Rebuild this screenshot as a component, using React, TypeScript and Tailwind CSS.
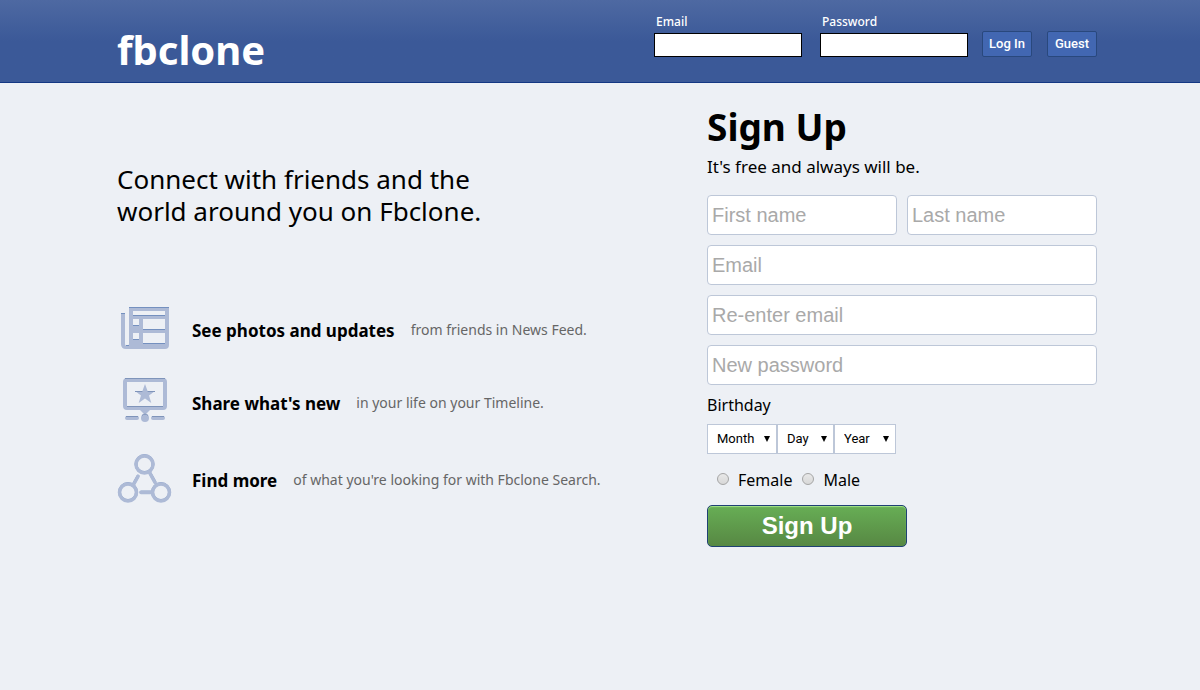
import type { ReactNode } from "react";

function NewsIcon() {
  return (
    <svg width="56" height="54" viewBox="0 1 56 54" aria-hidden="true">
      <path d="M4 11h4v31a1 1 0 0 0 4 0V5h40v38q0 4-4 4H9q-5 0-5-5z" fill="#adbad6" />
      <path d="M16 9h32v4H16zM16 17h6v6h-6zM26 17h22v10H26zM16 31h6v6h-6zM26 31h22v10H26z" fill="#edf0f5" />
      <path d="M4 11h4v1H4zM12 5h40v1H12zM16 13h32v1H16zM16 23h6v1h-6zM26 27h22v1H26zM16 37h6v1h-6zM26 41h22v1H26zM9 43h3v1H9z" fill="#7490bf" />
    </svg>
  );
}

function TimelineIcon() {
  return (
    <svg width="56" height="56" viewBox="0 2 56 56" aria-hidden="true">
      <rect x="8" y="7" width="40" height="28" rx="2" fill="none" stroke="#adbad6" strokeWidth="4" />
      <path d="M8 5.5h40M10 33.5h36" stroke="#7f94ba" strokeWidth="1" />
      <path d="M23 37h10l-5 5z" fill="#adbad6" />
      <path d="M28 11l2.600 7H38l-6 4.600 2.300 7.400-6.300-4.500-6.300 4.500 2.300-7.400-6-4.600h7.400z" fill="#adbad6" />
      <path d="M18 18.500h7.400M30.600 18.500H38" stroke="#7f94ba" strokeWidth="1" />
      <path d="M10 45h10M36 45h10" stroke="#adbad6" strokeWidth="4" strokeLinecap="round" />
      <path d="M9 43.500h12M35 43.500h12" stroke="#7f94ba" strokeWidth="1" />
      <circle cx="28" cy="45" r="4" fill="#adbad6" />
      <path d="M25 42.500a4 4 0 0 1 6 0" stroke="#7f94ba" fill="none" />
    </svg>
  );
}

function SearchGraphIcon() {
  return (
    <svg width="56" height="62" viewBox="0 -2 56 62" aria-hidden="true">
      <g fill="none" stroke="#8ba0c8" strokeWidth="3" strokeLinecap="round">
        <circle cx="27.500" cy="13" r="8.500" />
        <circle cx="11" cy="41" r="8.500" />
        <circle cx="44" cy="41" r="8.500" />
        <path d="M21 25l-5 9M33 22l5 9M24 41h10" />
      </g>
      <g fill="none" stroke="#adbad6" strokeWidth="3.500" strokeLinecap="round">
        <circle cx="27.500" cy="13.500" r="8.500" />
        <circle cx="11" cy="41.500" r="8.500" />
        <circle cx="44" cy="41.500" r="8.500" />
        <path d="M21 25.500l-5 9M33 22.500l5 9M24 41.500h10" />
      </g>
    </svg>
  );
}

function Feature({ icon, title, text }: { icon: ReactNode; title: string; text: string }) {
  return (
    <li className="flex items-center">
      {icon}
      <strong className="ml-[19px] pt-0.5 text-[17px] leading-6">{title}</strong>
      <span className="ml-4 text-sm leading-6 text-[#666]">{text}</span>
    </li>
  );
}

function LoginField({ id, label, type }: { id: string; label: string; type: string }) {
  return (
    <div className="mr-[18px] flex flex-col">
      <label htmlFor={id} className="mb-[3px] pl-0.5 text-xs leading-4 font-medium">
        {label}
      </label>
      <input id={id} type={type} className="h-6 w-[148px] border border-black bg-white px-1 text-sm text-black" />
    </div>
  );
}

const headerButton =
  "h-[26px] w-[50px] rounded-xs border border-[#29487d] bg-[#4267b2] font-[Roboto,sans-serif] text-[13px] leading-4 font-medium text-white";

function TextField({ label, type = "text" }: { label: string; type?: string }) {
  return (
    <input
      type={type}
      placeholder={label}
      aria-label={label}
      className="h-10 w-full min-w-0 rounded-[4px] border border-[#bdc7d8] bg-white px-1 font-['Liberation_Sans',Arial,sans-serif] text-xl placeholder:text-[#a9a9a9]"
    />
  );
}

function DateSelect({ label, width, options }: { label: string; width: string; options: (string | number)[] }) {
  return (
    <div className={`relative ${width}`}>
      <select
        aria-label={label}
        className="h-[30px] w-full appearance-none border border-[#bdc7d8] bg-white pl-[9px] font-[Roboto,sans-serif] text-[13px] font-normal"
      >
        <option>{label}</option>
        {options.map((option) => (
          <option key={option}>{option}</option>
        ))}
      </select>
      <svg className="pointer-events-none absolute top-3 right-[7px]" width="6" height="6" viewBox="0 0 6 6" aria-hidden="true">
        <path d="M0 0h6L3 6z" />
      </svg>
    </div>
  );
}

function Gender({ label }: { label: string }) {
  return (
    <label className="flex items-center gap-[9px]">
      <input
        type="radio"
        name="gender"
        className="mb-0.5 size-3 appearance-none rounded-full border border-[#a5a5a5] bg-linear-to-b from-[#e8e8e8] to-[#d8d8d8] checked:border-4 checked:border-[#555]"
      />
      {label}
    </label>
  );
}

const months = ["Jan", "Feb", "Mar", "Apr", "May", "Jun", "Jul", "Aug", "Sep", "Oct", "Nov", "Dec"];
const days = Array.from({ length: 31 }, (_, i) => i + 1);
const years = Array.from({ length: 100 }, (_, i) => 2016 - i);

export default function App() {
  return (
    <div className="min-h-screen bg-[#edf0f5] font-['Noto_Sans',sans-serif] text-black">
      <header className="flex items-start justify-between border-b border-[#133783] bg-linear-to-b from-[#4e69a2] to-[#3b5998] to-50% pr-[103px] pb-3 pl-[117px] text-white">
        <h1 className="pt-[30px] text-[40px] leading-10 font-bold">fbclone</h1>
        <form className="flex items-end pt-[14px]" onSubmit={(e) => e.preventDefault()}>
          <LoginField id="login-email" label="Email" type="email" />
          <LoginField id="login-password" label="Password" type="password" />
          <div className="-ml-1 flex gap-[15px]">
            <button type="submit" className={headerButton}>Log In</button>
            <button type="button" className={headerButton}>Guest</button>
          </div>
        </form>
      </header>

      <main className="flex items-start justify-between pr-[103px] pl-[117px]">
        <section className="pt-20">
          <h2 className="text-[26px] leading-8">
            Connect with friends and the
            <br />
            world around you on Fbclone.
          </h2>
          <ul className="mt-[76px] space-y-[18px]">
            <Feature icon={<NewsIcon />} title="See photos and updates" text="from friends in News Feed." />
            <Feature icon={<TimelineIcon />} title="Share what's new" text="in your life on your Timeline." />
            <Feature icon={<SearchGraphIcon />} title="Find more" text="of what you're looking for with Fbclone Search." />
          </ul>
        </section>

        <section className="w-[390px] pt-6">
          <h2 className="text-[37px] leading-10 font-bold">Sign Up</h2>
          <p className="mt-2 text-[17px] leading-6">It's free and always will be.</p>
          <form className="mt-4 flex flex-col gap-[10px]" onSubmit={(e) => e.preventDefault()}>
            <div className="flex gap-[10px]">
              <TextField label="First name" />
              <TextField label="Last name" />
            </div>
            <TextField label="Email" type="email" />
            <TextField label="Re-enter email" type="email" />
            <TextField label="New password" type="password" />
            <fieldset>
              <legend className="mb-[9px] text-base leading-5">Birthday</legend>
              <div className="flex">
                <DateSelect label="Month" width="w-[70px]" options={months} />
                <DateSelect label="Day" width="w-[57px]" options={days} />
                <DateSelect label="Year" width="w-[62px]" options={years} />
              </div>
            </fieldset>
            <div className="mt-[6px] flex gap-[10px] pl-[10px] text-base leading-5">
              <Gender label="Female" />
              <Gender label="Male" />
            </div>
            <button
              type="submit"
              className="mt-[5px] h-[42px] w-[200px] rounded-[5px] border border-[#1f4173] bg-linear-to-b from-[#67ae55] to-[#578843] font-['Liberation_Sans',Arial,sans-serif] text-2xl font-bold text-white inset-shadow-[0_1px_1px_#a4e388]"
            >
              Sign Up
            </button>
          </form>
        </section>
      </main>
    </div>
  );
}
